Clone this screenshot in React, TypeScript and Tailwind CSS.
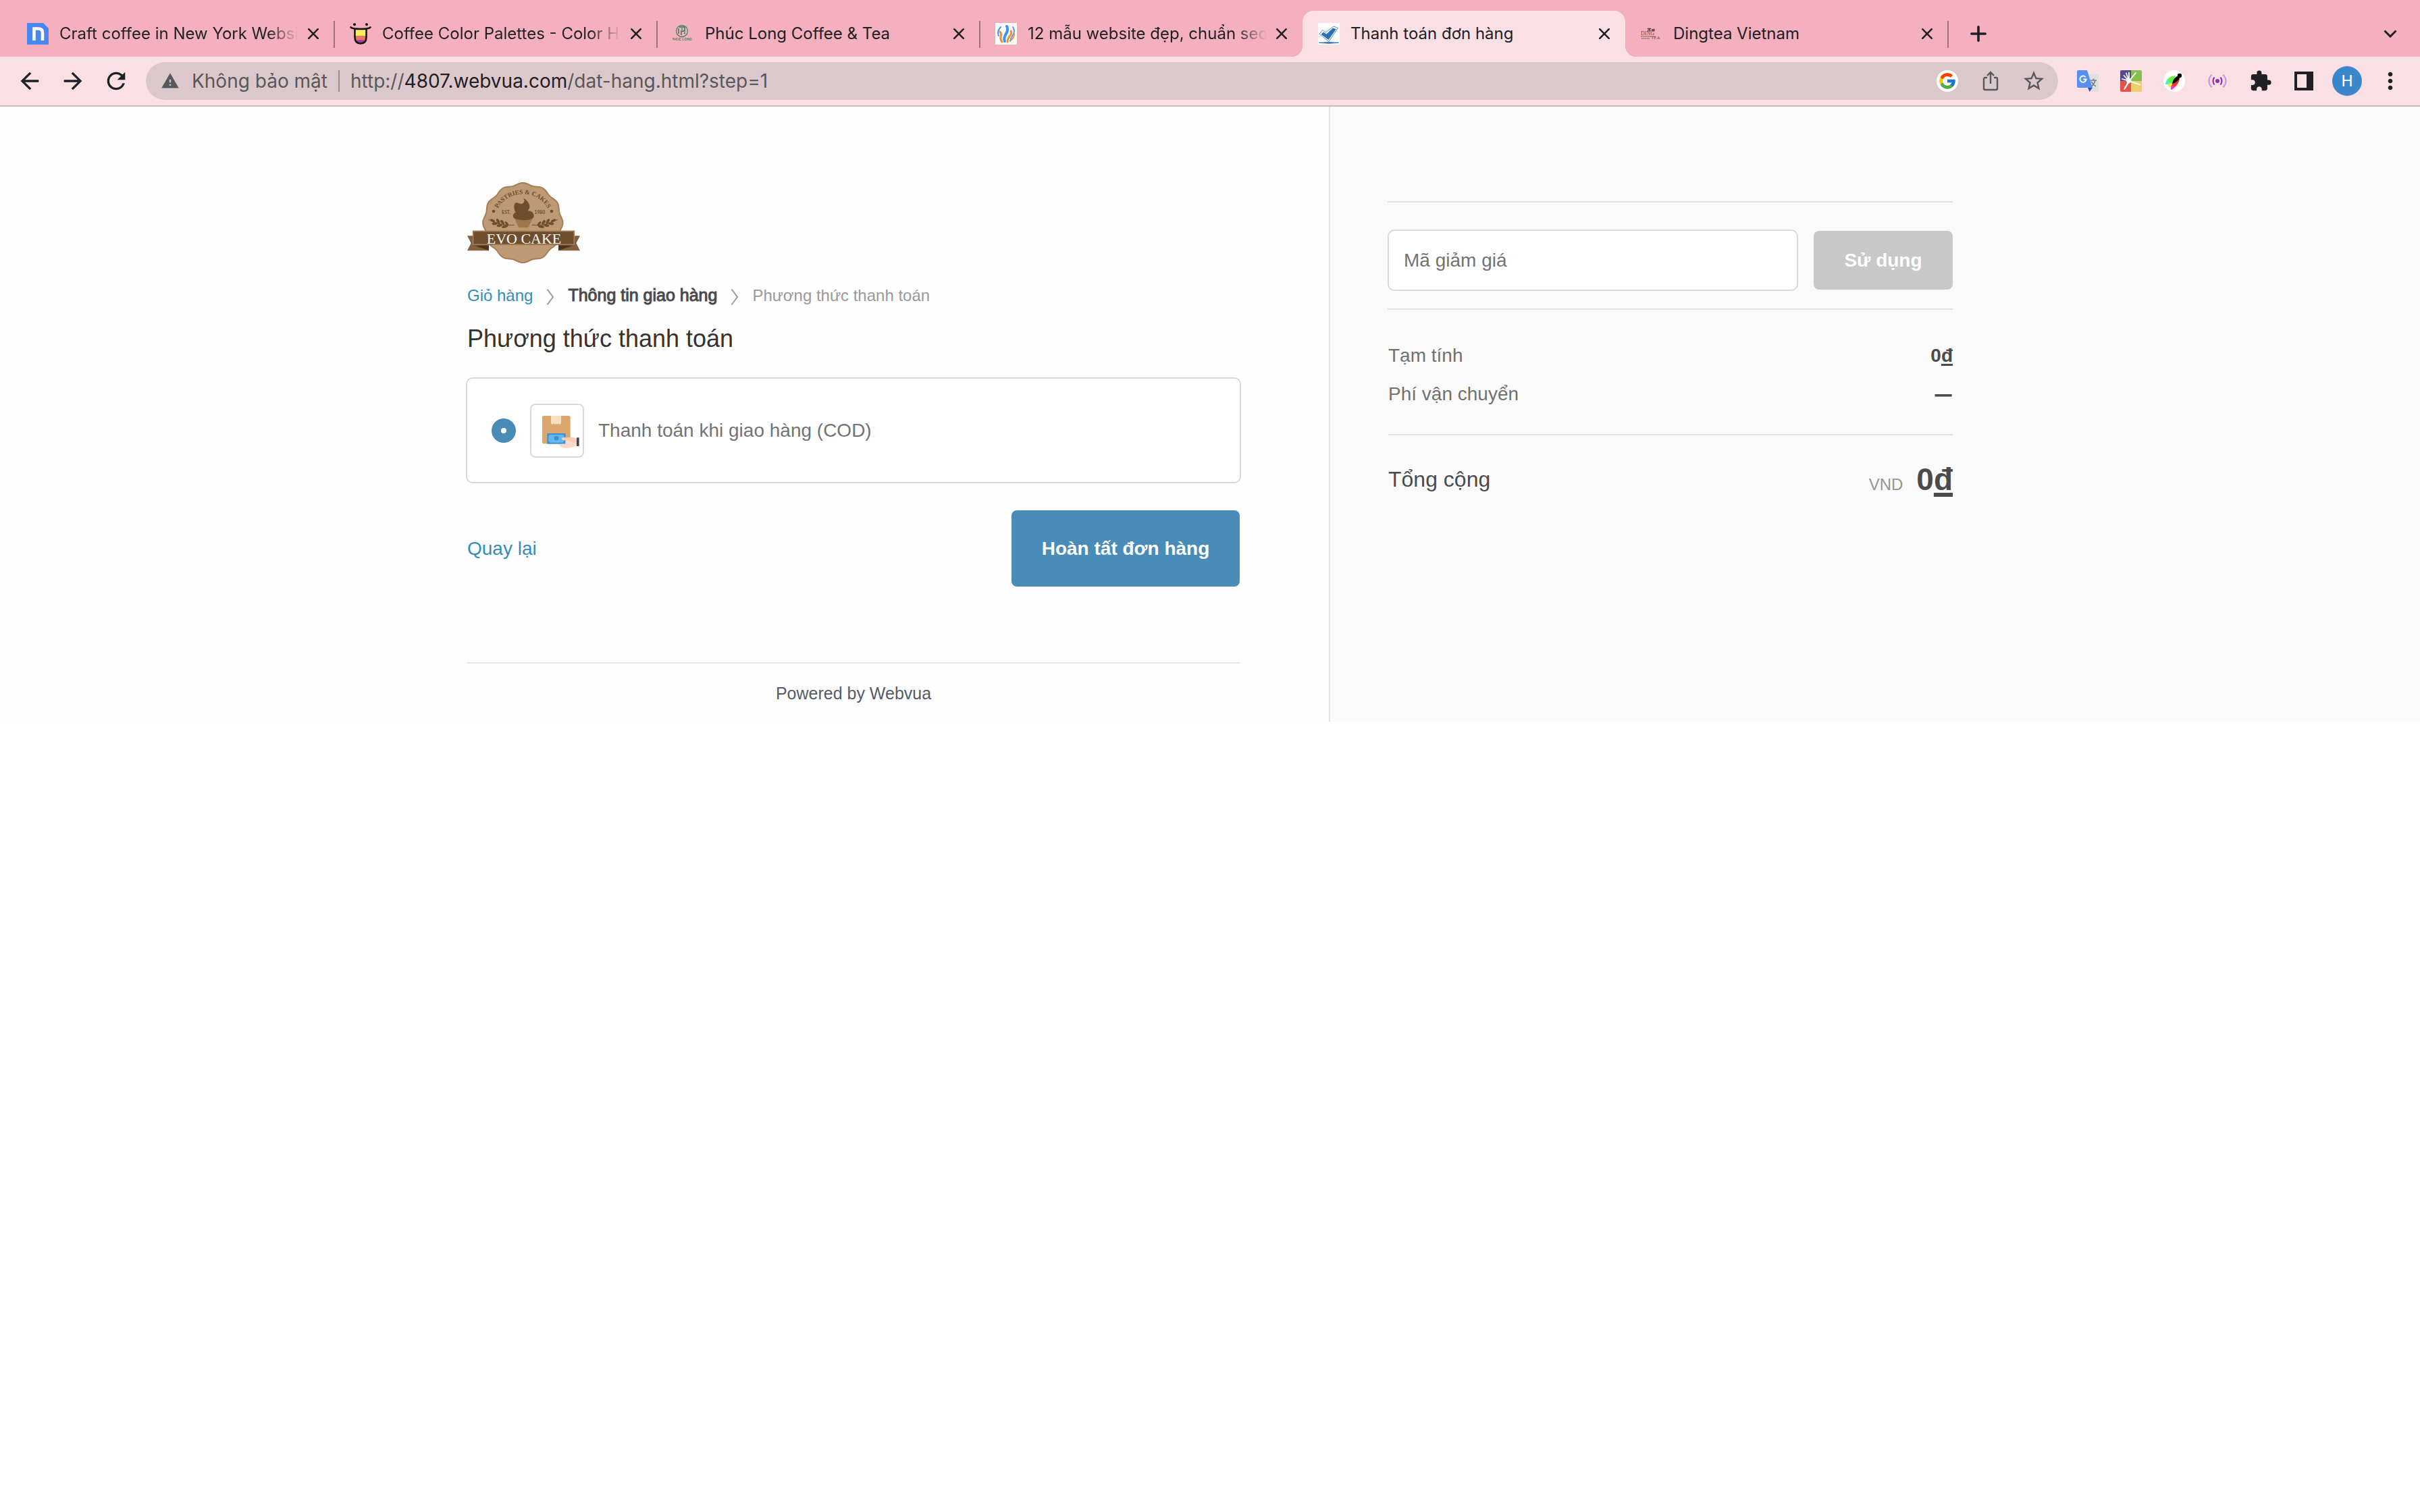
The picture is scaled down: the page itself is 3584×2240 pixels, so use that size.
import type { ReactNode } from "react";
import {
  MdArrowBack,
  MdArrowForward,
  MdExtension,
  MdMoreVert,
  MdRefresh,
  MdStarBorder,
  MdWarning,
} from "react-icons/md";
import { FcGoogle } from "react-icons/fc";

/* ---------- Favicons ---------- */

function LetterNIcon() {
  return (
    <svg viewBox="0 0 32 32" className="size-8">
      <path d="M0 1q0-1 1-1h23l8 8v23q0 1-1 1H1q-1 0-1-1z" fill="#4a86f0" />
      <path d="M10.500 26V8.500h6.500q6 0 6 6V26" fill="none" stroke="#fff" strokeWidth="4.600" />
    </svg>
  );
}

function ColorHuntIcon() {
  return (
    <svg viewBox="0 0 32 32" className="size-8">
      <path d="M7.500 8.500h17V21q0 9.500-8.500 9.500T7.500 21z" fill="#fdee5a" />
      <path d="M7.500 19h17v3q0 8.500-8.500 8.500T7.500 22z" fill="#f0706a" />
      <path d="M8.500 25.500h15q-2 5-7.500 5t-7.500-5z" fill="#8f3f97" />
      <path d="M7.500 9v12q0 9.500 8.500 9.500t8.500-9.500V9" fill="none" stroke="#111" strokeWidth="2.500" />
      <path d="M1.500 6.500q3 2.500 14.500 2.500t14.500-2.500" fill="none" stroke="#111" strokeWidth="2.600" strokeLinecap="round" />
      <circle cx="7" cy="2.200" r="2" fill="#111" />
      <circle cx="25" cy="2.200" r="2" fill="#111" />
    </svg>
  );
}

function PhucLongIcon() {
  return (
    <svg viewBox="0 0 32 32" className="size-8">
      <g fill="none" stroke="#4f8463">
        <circle cx="14" cy="12" r="8.500" strokeWidth="1.300" />
        <path d="M10 6h8v6h-5v6M9 8v8M13 9h2M17 15h2" strokeWidth="1.800" />
      </g>
      <text x="14" y="26" textAnchor="middle" fontSize="5" fontWeight="700" fontFamily="Liberation Sans" fill="#557a5f">
        PHUC LONG
      </text>
    </svg>
  );
}

function FlameIcon() {
  return (
    <svg viewBox="0 0 32 32" className="size-8">
      <path d="M0 0h32v32H0z" fill="#fff" />
      <g fill="none" strokeLinecap="round">
        <path d="M17 5q3 5-1 11t-2 11" stroke="#3d93f2" strokeWidth="4" />
        <path d="M8 6q-6 7-3 13" stroke="#3d93f2" strokeWidth="2" />
        <path d="M26 6q4 6 0 12-3 4-4 9" stroke="#3d93f2" strokeWidth="1.800" />
        <path d="M7 13q3 4 1 8-1 3 2 7" stroke="#f28c38" strokeWidth="3" />
        <path d="M23 12q2 4-2 8-3 4-3 8" stroke="#f28c38" strokeWidth="3" />
        <path d="M28 16q0 6-5 10" stroke="#f28c38" strokeWidth="2" />
      </g>
    </svg>
  );
}

function CheckIcon() {
  return (
    <svg viewBox="0 0 32 32" className="size-8">
      <path d="M0 0h32v32H0z" fill="#fff" />
      <path d="M2 16.500 6.500 10.500l5 3.500L23 5l6.500 2.500L16 27.500z" fill="none" stroke="#5a8fc4" strokeWidth="1" />
      <path d="M4.500 17 8 13.500l4.500 3L22 7.500l5 1.500-11.500 16z" fill="#2a72b8" />
      <path d="M1.500 29.300q14-1.300 29 0-14 1.900-29 0z" fill="#2a72b8" stroke="#2a72b8" strokeWidth="1" />
    </svg>
  );
}

function DingteaIcon() {
  return (
    <svg viewBox="0 0 32 32" className="size-8">
      <g fontFamily="Liberation Serif" fill="#6b4a52">
        <text x="0" y="18" fontSize="8">DING</text>
        <text x="15" y="24" fontSize="7">TEA</text>
      </g>
      <path d="M10 8l5 4m0-4-5 4M12.500 7.500v5M17 9v3.500M19.500 8.500v4M16.500 10.500h4" stroke="#4a333a" strokeWidth="1.400" />
      <path d="M0 20h22M1 23h12" stroke="#6b4a52" strokeWidth="1" strokeDasharray="2 0.600" />
    </svg>
  );
}

/* ---------- Browser chrome ---------- */

function CloseButton() {
  return (
    <button type="button" aria-label="Close tab" className="flex size-8 shrink-0 items-center justify-center text-[#1f2024]">
      <svg viewBox="0 0 16 16" className="size-4" stroke="currentColor" strokeWidth="2.600" strokeLinecap="round">
        <path d="M1.200 1.200l13.600 13.600M14.800 1.200 1.200 14.800" />
      </svg>
    </button>
  );
}

type TabInfo = { title: string; icon: ReactNode; divider: boolean; fade?: boolean; active?: boolean };

const tabs: TabInfo[] = [
  { title: "Craft coffee in New York Websi", icon: <LetterNIcon />, divider: true, fade: true },
  { title: "Coffee Color Palettes - Color H", icon: <ColorHuntIcon />, divider: true, fade: true },
  { title: "Phúc Long Coffee & Tea", icon: <PhucLongIcon />, divider: true },
  { title: "12 mẫu website đẹp, chuẩn seo", icon: <FlameIcon />, divider: false, fade: true },
  { title: "Thanh toán đơn hàng", icon: <CheckIcon />, divider: false, active: true },
  { title: "Dingtea Vietnam", icon: <DingteaIcon />, divider: true },
];

function Tab({ tab }: { tab: TabInfo }) {
  const shape = tab.active
    ? "rounded-t-2xl bg-[#fae0e4] before:absolute before:bottom-0 before:-left-4 before:size-4 before:bg-[radial-gradient(circle_at_0_0,transparent_16px,#fae0e4_16px)] after:absolute after:-right-4 after:bottom-0 after:size-4 after:bg-[radial-gradient(circle_at_100%_0,transparent_16px,#fae0e4_16px)]"
    : "";
  const mask = tab.fade ? "[mask-image:linear-gradient(to_right,#000_87%,transparent)]" : "";
  return (
    <div className={`relative flex h-[68px] min-w-0 max-w-[478px] flex-1 items-center pr-[15px] pl-[23px] ${shape}`}>
      <span className="shrink-0">{tab.icon}</span>
      <span className={`ml-4 mr-1.5 min-w-0 flex-1 overflow-hidden text-2xl whitespace-nowrap text-[#1f2024] ${mask}`}>
        {tab.title}
      </span>
      <CloseButton />
      {tab.divider && <span className="absolute top-[15px] -right-px h-10 w-0.5 bg-[#a0727c]" />}
    </div>
  );
}

function TabStrip() {
  return (
    <div className="flex items-end bg-[#f4b0be] pt-4 pr-6 pl-[17px]">
      <div className="flex min-w-0 flex-1 items-end">
        {tabs.map((tab) => (
          <Tab key={tab.title} tab={tab} />
        ))}
        <button type="button" aria-label="New tab" className="ml-5 flex h-[68px] w-[50px] items-center justify-center text-[#1f2024]">
          <svg viewBox="0 0 24 24" className="size-6" stroke="currentColor" strokeWidth="3.600" strokeLinecap="round">
            <path d="M12 1.800v20.400M1.800 12h20.400" />
          </svg>
        </button>
      </div>
      <button type="button" aria-label="Search tabs" className="flex h-[68px] w-10 items-center justify-center text-[#1f2024]">
        <svg viewBox="0 0 20 12" className="h-3 w-5" fill="none" stroke="currentColor" strokeWidth="3">
          <path d="M1.500 1.500 10 10l8.500-8.500" />
        </svg>
      </button>
    </div>
  );
}

function ToolButton({ label, children }: { label: string; children: ReactNode }) {
  return (
    <button type="button" aria-label={label} className="flex size-16 shrink-0 items-center justify-center">
      {children}
    </button>
  );
}

function ShareIcon() {
  return (
    <svg viewBox="0 0 24 30" className="h-[30px] w-6" fill="none" stroke="currentColor" strokeWidth="2.400">
      <path d="M7 10H4q-2 0-2 2v14q0 2 2 2h16q2 0 2-2V12q0-2-2-2h-3M12 19V2.500M7 7l5-5 5 5" />
    </svg>
  );
}

function TranslateIcon() {
  return (
    <svg viewBox="0 0 32 32" className="size-8">
      <path d="M12 6h18q2 0 2 2v22q0 2-2 2H19z" fill="#dddfe0" />
      <path d="M16 26h7l-4.500 6z" fill="#3850b5" />
      <path d="M2 0h13l8 26H2q-2 0-2-2V2q0-2 2-2z" fill="#5a8ff0" />
      <path d="M12.600 10.300A4.600 4.600 0 1 0 13.600 13.500h-4.200" fill="none" stroke="#fff" strokeWidth="2" />
      <path d="M19.500 15h9.500M24.500 12.500V15M27 15q-1 5-6 9.500M21.500 17q2 4.500 6.500 7" fill="none" stroke="#6d7f8b" strokeWidth="1.600" />
    </svg>
  );
}

function BurstIcon() {
  return (
    <svg viewBox="0 0 32 32" className="size-8">
      <path d="M2 0h14v16H0V2q0-2 2-2z" fill="#544a8c" />
      <path d="M16 0h14q2 0 2 2v14H16z" fill="#86bd50" />
      <path d="M0 16h16v16H2q-2 0-2-2z" fill="#e0524a" />
      <path d="M16 16h16v14q0 2-2 2H16z" fill="#efce70" />
      <g stroke="#fff" strokeLinecap="round" strokeWidth="1.800">
        <path d="M13 16 3 13M13 16 5.500 8M13 16 9 4.500M13 16 13 3.500M13 16 23 4M13 16l16.500 5.500M13 16 6 28" />
      </g>
      <path d="M8 13.500 15 12l2 4.500-5 4-5 8 3-10z" fill="#fff" />
    </svg>
  );
}

function FeatherIcon() {
  return (
    <svg viewBox="0 0 32 32" className="size-8">
      <circle cx="16" cy="16" r="16" fill="#fff" />
      <path d="M3 21Q5 9 18 8l-4 13z" fill="#63f04a" />
      <path d="M3 21q1-4 4-7l2 7z" fill="#3df0e6" />
      <path d="M6 22q3-4 8-2l1 5q-5 2-9-3z" fill="#f8ee2c" />
      <path d="M11 26q3-12 13-16 1 10-12 19z" fill="#ee3522" />
      <path d="M11 29q0-4 1-6l6 1q-3 4-7 5z" fill="#f32df0" />
      <path d="M13 20Q15 10 23 8l2 2q-4 8-12 10z" fill="#000" />
      <circle cx="24" cy="8" r="3.200" fill="#000" />
    </svg>
  );
}

function BroadcastIcon() {
  return (
    <svg viewBox="0 0 28 24" className="h-6 w-7" fill="none" strokeWidth="2.200">
      <circle cx="14" cy="12" r="3" fill="#9232b0" />
      <path d="M9.500 6.500q-4 5.500 0 11M18.500 6.500q4 5.500 0 11" stroke="#9232b0" />
      <path d="M5.500 2.500q-8 9.500 0 19M22.500 2.500q8 9.500 0 19" stroke="#cd9ce0" />
    </svg>
  );
}

function PanelIcon() {
  return (
    <svg viewBox="0 0 28 28" className="size-7">
      <path fillRule="evenodd" d="M0 0h28v28H0zM4 4v20h14V4z" fill="#1f2024" />
    </svg>
  );
}

function Toolbar() {
  return (
    <div className="flex h-[74px] items-center border-b-2 border-[#cbb8bc] bg-[#fae0e4] pr-3 pl-3 text-[#1f2024]">
      <ToolButton label="Back"><MdArrowBack size={40} /></ToolButton>
      <ToolButton label="Forward"><MdArrowForward size={40} /></ToolButton>
      <ToolButton label="Reload"><MdRefresh size={40} /></ToolButton>
      <div className="ml-3 flex h-14 min-w-0 flex-1 items-center rounded-full bg-[#dcc8cb] pl-[22px] pr-1 text-[28px] text-[#55585c]">
        <MdWarning size={28} className="shrink-0" />
        <span className="ml-[18px] whitespace-nowrap">Không bảo mật</span>
        <span className="mx-4 h-8 w-0.5 shrink-0 bg-[#9a8c8f]" />
        <span className="min-w-0 flex-1 truncate">
          http://<span className="text-[#1f2024]">4807.webvua.com</span>/dat-hang.html?step=1
        </span>
        <ToolButton label="Google">
          <span className="flex size-8 items-center justify-center rounded-full bg-white">
            <FcGoogle size={28} />
          </span>
        </ToolButton>
        <ToolButton label="Share"><ShareIcon /></ToolButton>
        <ToolButton label="Bookmark"><MdStarBorder size={36} /></ToolButton>
      </div>
      <div className="ml-3 flex items-center">
        <ToolButton label="Translate"><TranslateIcon /></ToolButton>
        <ToolButton label="Color picker"><BurstIcon /></ToolButton>
        <ToolButton label="Feather"><FeatherIcon /></ToolButton>
        <ToolButton label="Broadcast"><BroadcastIcon /></ToolButton>
        <ToolButton label="Extensions"><MdExtension size={34} /></ToolButton>
        <ToolButton label="Side panel"><PanelIcon /></ToolButton>
        <ToolButton label="Profile">
          <span className="flex size-11 items-center justify-center rounded-full bg-[#3a88cb] font-[Roboto] text-2xl text-white">H</span>
        </ToolButton>
        <ToolButton label="Menu"><MdMoreVert size={40} /></ToolButton>
      </div>
    </div>
  );
}

/* ---------- Checkout page ---------- */

const badgeOutline =
  Array.from({ length: 180 }, (_, i) => {
    const angle = (i * Math.PI) / 90;
    const radius = 173 + 4.500 * Math.cos(12 * angle);
    const x = 313 + radius * Math.sin(angle);
    const y = 240 - radius * Math.cos(angle);
    return `${i === 0 ? "M" : "L"}${x.toFixed(1)} ${y.toFixed(1)}`;
  }).join("") + "Z";

function WheatEar() {
  return (
    <g fill="#6f4e2e">
      <path d="M160 226q50 28 114 24-60 8-114-24z" stroke="#6f4e2e" strokeWidth="2" />
      <ellipse cx="179" cy="230" rx="12" ry="5" transform="rotate(25 179 230)" />
      <ellipse cx="203" cy="233" rx="12" ry="6" transform="rotate(60 203 233)" />
      <ellipse cx="222" cy="238" rx="12" ry="6" transform="rotate(55 222 238)" />
      <ellipse cx="241" cy="243" rx="11" ry="5" transform="rotate(50 241 243)" />
      <ellipse cx="188" cy="244" rx="12" ry="6" transform="rotate(-10 188 244)" />
      <ellipse cx="209" cy="252" rx="12" ry="6" transform="rotate(-10 209 252)" />
      <ellipse cx="233" cy="257" rx="14" ry="6" transform="rotate(-14 233 257)" />
    </g>
  );
}

function EvoCakeLogo() {
  return (
    <svg viewBox="66 60 501 360" className="h-[120px] w-[167px]" role="img" aria-label="Evo Cake">
      <path d="M66 298h96v66H66l17-33z" fill="#83603f" />
      <path d="M567 298h-96v66h96l-17-33z" fill="#83603f" />
      <path d={badgeOutline} fill="#bd9a74" stroke="#a67e55" strokeWidth="6" />
      <path d="M92 340h70v23z" fill="#53301a" />
      <path d="M541 340h-70v23z" fill="#53301a" />
      <path id="badge-arc" d="M185 240a128 128 0 0 1 256 0" fill="none" />
      <text fontFamily="Liberation Serif" fontWeight="700" fontSize="28" fill="#6f4e2e" textAnchor="middle">
        <textPath href="#badge-arc" startOffset="50%">PASTRIES &amp; CAKES</textPath>
      </text>
      <circle cx="183" cy="189" r="7" fill="#6f4e2e" />
      <circle cx="441" cy="189" r="7" fill="#6f4e2e" />
      <g fontFamily="Lato" fontWeight="700" fontSize="20" fill="#6f4e2e" textAnchor="middle">
        <text x="239" y="201">EST.</text>
        <text x="388" y="201">1980</text>
      </g>
      <path d="M277 222h78l-18 40h-43z" fill="#9f774d" />
      <path d="M315 130q30 18 28 42-2 10-8 14 26 2 27 24-1 18-46 18t-47-18q1-12 12-16-8-12-7-28 2-16 12-15 14 5 24 5 16-8 5-26z" fill="#6f4e2e" />
      <WheatEar />
      <g transform="matrix(-1 0 0 1 627 0)"><WheatEar /></g>
      <path d="M92 277h449v60H92z" fill="#6f4e2e" stroke="#a67e55" strokeWidth="5" />
      <text x="318" y="332" fontFamily="Liberation Serif" fontSize="66" fill="#fff" textAnchor="middle">EVO CAKE</text>
    </svg>
  );
}

function CodIcon() {
  return (
    <svg viewBox="345 174 240 240" className="size-20">
      <rect x="399" y="228" width="125" height="124" rx="6" fill="#dba76c" />
      <path d="M438 228h45v34l-6 5-5-5-6 5-5-5-6 5-5-5-6 5-6-5z" fill="#f8dfc0" />
      <rect x="421" y="306" width="82" height="47" fill="#3f8ecf" />
      <path d="M433 312h58l6 7v21l-6 7h-58l-6-7v-21z" fill="#62b8f0" />
      <circle cx="462" cy="328" r="10" fill="#3f8ecf" />
      <path d="M470 354l32-1v-17l30-13 20 7v31l-36 10h-24q-14-5-22-17z" fill="#f7d9c8" />
      <path d="M484 329q2-5 10-5h38l22 6v17h-20l-14-10h-24q-9 0-12-8z" fill="#f8ccae" />
      <rect x="552" y="325" width="11" height="38" rx="2" fill="#3f474c" />
    </svg>
  );
}

function Separator() {
  return (
    <svg viewBox="0 0 12 26" className="mt-1 h-[26px] w-3" fill="none" stroke="#999" strokeWidth="2">
      <path d="M1.500 1.500 10 13 1.500 24.500" />
    </svg>
  );
}

function PaymentPane() {
  return (
    <main className="flex justify-end bg-[#fefefe] pt-28 pr-[132px] pb-[26px]">
      <div className="w-[1144px] max-w-full">
        <a href="#home" className="block w-fit"><EvoCakeLogo /></a>
        <nav aria-label="Breadcrumb" className="mt-8 flex h-8 items-center gap-5 text-2xl">
          <a href="#cart" className="text-[#338dbc]">Giỏ hàng</a>
          <Separator />
          <a href="#shipping" className="text-[25px] text-[#4a4a4a] [-webkit-text-stroke:1px]">Thông tin giao hàng</a>
          <Separator />
          <span className="text-[#999]">Phương thức thanh toán</span>
        </nav>
        <h2 className="mt-7 text-4xl text-[#333]">Phương thức thanh toán</h2>
        <form>
          <label className="-mx-0.5 mt-[37px] flex min-h-[157px] items-center gap-[21px] rounded-[10px] border-2 border-[#d9d9d9] bg-white px-9 text-[28px] text-[#737373]">
            <input
              type="radio"
              name="payment"
              defaultChecked
              className="size-9 shrink-0 appearance-none rounded-full border-[14px] border-[#4a8cb8] bg-white"
            />
            <span className="flex size-20 items-center justify-center rounded-lg shadow-[inset_0_0_0_2px_#d9d9d9]">
              <CodIcon />
            </span>
            Thanh toán khi giao hàng (COD)
          </label>
          <div className="mt-10 flex items-center justify-between text-[28px]">
            <a href="#back" className="text-[#338dbc]">Quay lại</a>
            <button type="submit" className="h-[113px] min-w-[338px] rounded-lg bg-[#4a8cb8] px-10 font-bold text-white">
              Hoàn tất đơn hàng
            </button>
          </div>
        </form>
        <footer className="mt-28 border-t-2 border-[#e6e6e6] pt-7 text-center text-[25px] leading-8 text-[#545b69]">
          Powered by Webvua
        </footer>
      </div>
    </main>
  );
}

function SummaryPane() {
  return (
    <aside className="border-l-2 border-[#e1e1e1] bg-[#fafafa] pt-[140px] pl-[86px] text-[28px]">
      <div className="w-[836px] max-w-full">
        <form className="-ml-px flex items-center gap-[23px] border-y-2 border-[#e1e1e1] pt-10 pb-[26px]">
          <input
            type="text"
            aria-label="Mã giảm giá"
            placeholder="Mã giảm giá"
            className="h-[91px] min-w-0 flex-1 rounded-[10px] border-2 border-[#d9d9d9] bg-white px-[22px] placeholder:text-[#737373]"
          />
          <button type="button" className="h-[87px] w-[206px] rounded-lg bg-[#c8c8c8] font-bold text-white">
            Sử dụng
          </button>
        </form>
        <dl className="text-[#4b4b4b]">
          <div className="flex justify-between pt-12 leading-10">
            <dt className="text-[#717171]">Tạm tính</dt>
            <dd className="font-bold">
              0<span className="underline decoration-[3px] underline-offset-[3px]">đ</span>
            </dd>
          </div>
          <div className="flex justify-between border-b-2 border-[#e1e1e1] pt-[17px] pb-[39px] leading-10">
            <dt className="text-[#717171]">Phí vận chuyển</dt>
            <dd className="pr-0.5 text-2xl leading-10 font-bold [-webkit-text-stroke:1px]">—</dd>
          </div>
          <div className="flex items-center justify-between pt-[37px]">
            <dt className="text-[32px] leading-14">Tổng cộng</dt>
            <dd className="flex items-baseline gap-5">
              <span className="text-2xl text-[#969696]">VND</span>
              <span className="text-[46px] leading-14 font-bold">
                0<span className="underline decoration-[6px] underline-offset-[4px]">đ</span>
              </span>
            </dd>
          </div>
        </dl>
      </div>
    </aside>
  );
}

export default function App() {
  return (
    <div className="min-h-screen bg-white">
      <header className="font-[Inter,sans-serif]">
        <TabStrip />
        <Toolbar />
      </header>
      <div className="grid grid-cols-[calc(50%+176px)_1fr] font-['Liberation_Sans',sans-serif]">
        <PaymentPane />
        <SummaryPane />
      </div>
    </div>
  );
}
